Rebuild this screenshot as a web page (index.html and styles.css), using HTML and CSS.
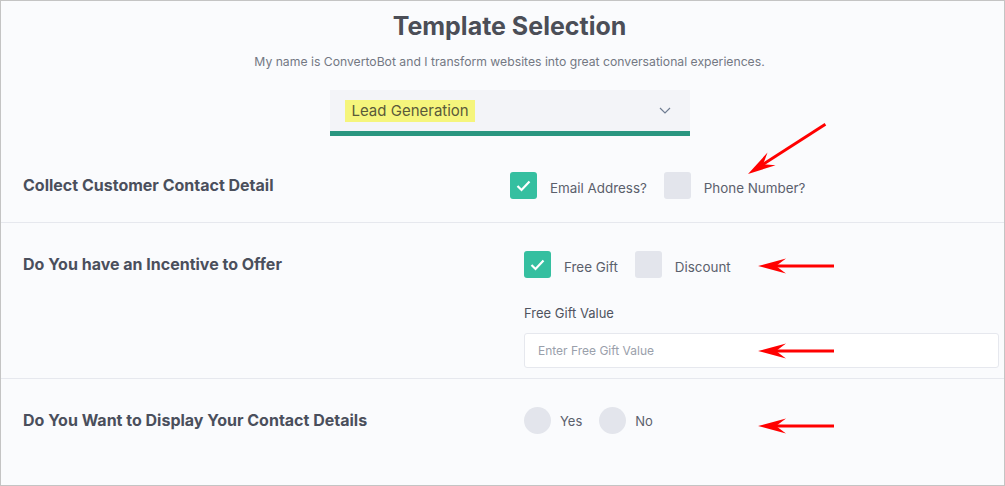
FILE: index.html
```html
<!DOCTYPE html>
<html>
<head>
<meta charset="utf-8">
<link rel="stylesheet" href="styles.css">
</head>
<body>
<div class="frame">
  <header class="head">
    <h1 class="title">Template Selection</h1>
    <p class="subtitle">My name is ConvertoBot and I transform websites into great conversational experiences.</p>
    <div class="select">
      <span class="select-value">Lead Generation</span>
      <svg class="chevron" width="12" height="7" viewBox="0 0 12 7"><path d="M1 1 L6 6 L11 1" fill="none" stroke="#6f7d92" stroke-width="1.2"/></svg>
    </div>
  </header>

  <section class="row row-first">
    <div class="label">Collect Customer Contact Detail</div>
    <div class="opts">
      <span class="box checked"><svg width="15" height="12" viewBox="0 0 15 12"><path d="M1.5 6 L5.5 10 L13.5 1.5" fill="none" stroke="#fff" stroke-width="2.2"/></svg></span>
      <span class="opt-text">Email Address?</span>
      <span class="box"></span>
      <span class="opt-text">Phone Number?</span>
    </div>
  </section>

  <section class="row">
    <div class="label">Do You have an Incentive to Offer</div>
    <div class="col">
      <div class="opts">
        <span class="box checked"><svg width="15" height="12" viewBox="0 0 15 12"><path d="M1.5 6 L5.5 10 L13.5 1.5" fill="none" stroke="#fff" stroke-width="2.2"/></svg></span>
        <span class="opt-text">Free Gift</span>
        <span class="box"></span>
        <span class="opt-text">Discount</span>
      </div>
      <div class="field-label">Free Gift Value</div>
      <div class="input">Enter Free Gift Value</div>
    </div>
  </section>

  <section class="row row-last">
    <div class="label">Do You Want to Display Your Contact Details</div>
    <div class="opts radios">
      <span class="radio"></span>
      <span class="radio-text">Yes</span>
      <span class="radio"></span>
      <span class="radio-text">No</span>
    </div>
  </section>

  <svg class="arrows" width="1005" height="486" viewBox="0 0 1005 486">
    <g fill="#ff0000" stroke="#ff0000">
      <g transform="translate(748,174) rotate(-32.7)">
        <line x1="16" y1="0" x2="92" y2="0" stroke-width="3"/>
        <polygon points="0,0 28,-7.5 18,0 28,7.5" stroke="none"/>
      </g>
      <g transform="translate(758,266)">
        <line x1="16" y1="0" x2="76" y2="0" stroke-width="3"/>
        <polygon points="0,0 28,-7.5 18,0 28,7.5" stroke="none"/>
      </g>
      <g transform="translate(758,351)">
        <line x1="16" y1="0" x2="76" y2="0" stroke-width="3"/>
        <polygon points="0,0 28,-7.5 18,0 28,7.5" stroke="none"/>
      </g>
      <g transform="translate(758,426)">
        <line x1="16" y1="0" x2="76" y2="0" stroke-width="3"/>
        <polygon points="0,0 28,-7.5 18,0 28,7.5" stroke="none"/>
      </g>
    </g>
  </svg>
</div>
</body>
</html>
```

FILE: styles.css
```css
* { box-sizing: border-box; }
html, body { margin: 0; padding: 0; }
body {
  font-family: "Inter", "Open Sans", "DejaVu Sans", sans-serif;
  color: #4b4f5a;
}
.frame {
  position: relative;
  width: 1005px;
  height: 486px;
  border: 1px solid #c4c4c4;
  background: #fafbfd;
  overflow: hidden;
}
.head {
  display: flex;
  flex-direction: column;
  align-items: center;
  padding-top: 10px;
  padding-left: 14px;
}
.title {
  margin: 0;
  font-size: 25px;
  line-height: 30px;
  font-weight: 700;
  color: #4b4e57;
}
.subtitle {
  margin: 13px 0 0;
  font-size: 12.2px;
  line-height: 16px;
  color: #737883;
}
.select {
  margin-top: 20px;
  width: 360px;
  height: 46px;
  background: #f3f4f8;
  border-bottom: 5px solid #2a9680;
  display: flex;
  align-items: center;
  justify-content: space-between;
  padding: 0 19px 0 15px;
}
.select-value {
  background: #f5f57c;
  font-size: 15px;
  line-height: 22px;
  padding: 0 6px 0 7px;
  color: #5a5a3a;
}
.row {
  display: grid;
  grid-template-columns: 501px 1fr;
  padding: 28px 5px 10px 22px;
  border-bottom: 1px solid #e6e8ee;
}
.row-first {
  grid-template-columns: 487px 1fr;
  padding-top: 36px;
  padding-bottom: 23px;
}
.row-last { border-bottom: none; }
.label {
  font-size: 16px;
  line-height: 27px;
  font-weight: 700;
  color: #4a4f5c;
}
.col { display: flex; flex-direction: column; }
.opts {
  display: flex;
  align-items: center;
  height: 27px;
}
.box {
  width: 27px;
  height: 27px;
  border-radius: 3px;
  background: #e3e5ec;
  display: flex;
  align-items: center;
  justify-content: center;
  flex: none;
}
.box.checked { background: #35bfa0; }
.opt-text {
  font-size: 13.4px;
  color: #5b606c;
  margin: 4px 17px 0 13px;
}
.field-label {
  margin-top: 26px;
  font-size: 13px;
  line-height: 18px;
  color: #4f5460;
}
.input {
  margin-top: 11px;
  height: 35px;
  background: #fff;
  border: 1px solid #e6e8ee;
  border-radius: 3px;
  font-size: 12px;
  color: #9aa0ab;
  display: flex;
  align-items: center;
  padding-left: 13px;
}
.radio {
  width: 27px;
  height: 27px;
  border-radius: 50%;
  background: #e3e5ec;
  flex: none;
}
.radio-text {
  font-size: 13px;
  color: #5b606c;
  margin: 0 17px 0 9px;
}
.arrows {
  position: absolute;
  left: -1px;
  top: -1px;
  pointer-events: none;
}
```
